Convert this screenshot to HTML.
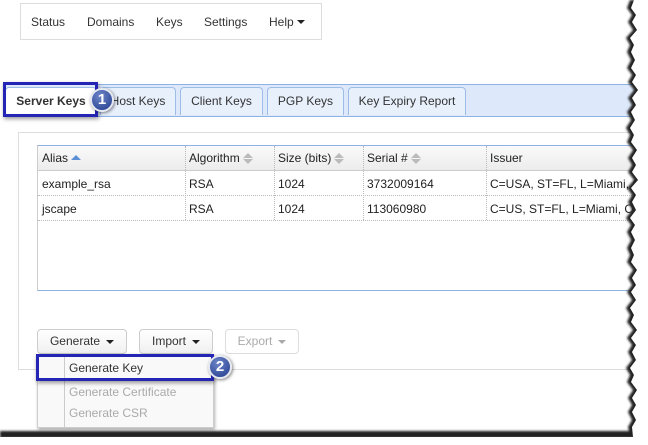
<!DOCTYPE html>
<html><head><style>
body{margin:0;width:648px;height:445px;overflow:hidden;background:#fff;font-family:"Liberation Sans",Arial,sans-serif;font-size:12px;color:#222;position:relative}
.a{position:absolute}
.nav{left:20px;top:3px;width:300px;height:35px;border:1px solid #ddd;}
.nav span{position:absolute;top:11px;color:#333}
.tabbar{left:3px;top:84px;width:640px;height:31px;background:#dde9fb;border-top:1px solid #8db2e3;border-bottom:1px solid #8db2e3}
.tab{top:87px;height:28px;background:#e8f0fc;border:1px solid #9dbde8;border-bottom:none;border-radius:4px 4px 0 0;box-sizing:border-box;text-align:center;line-height:26px;color:#333}
.panel{left:18px;top:132px;width:640px;height:236px;border:1px solid #ddd;border-right:none}
.tbl{left:37px;top:145px;width:620px;height:144px;border-top:1px solid #8db2e3;border-left:1px solid #ccc;border-bottom:1px solid #8db2e3}
.hdr{left:38px;top:146px;width:620px;height:24px;background:linear-gradient(#fafafa,#ececec);border-bottom:1px solid #ccc}
.c{position:absolute;color:#222}
.vl{position:absolute;width:0;border-left:1px dotted #bbb}
.hl{position:absolute;left:38px;width:620px;border-top:1px dotted #bbb}
.btn{top:329px;height:25px;border:1px solid #ccc;border-radius:4px;box-sizing:border-box;background:linear-gradient(#fff,#f0f0f0);line-height:23px;text-align:center;color:#333}
.car{display:inline-block;width:0;height:0;border-left:4px solid transparent;border-right:4px solid transparent;border-top:4px solid #222;vertical-align:middle;margin-left:6px}
.srt{display:inline-block;vertical-align:middle;margin-left:3px;width:10px;height:11px;position:relative}
.srt:before{content:"";position:absolute;left:0;top:0;border-left:5px solid transparent;border-right:5px solid transparent;border-bottom:5px solid #bbb}
.srt:after{content:"";position:absolute;left:0;top:6px;border-left:5px solid transparent;border-right:5px solid transparent;border-top:5px solid #bbb}
.menu{left:37px;top:355px;width:175px;height:71px;border:1px solid #ccc;background:#f9f9f9;box-shadow:1px 2px 3px rgba(0,0,0,.3)}
.badge{width:20px;height:20px;border-radius:50%;background:radial-gradient(circle at 40% 30%,#6f86c8,#1e3a8c);border:2px solid #e5e8f0;box-shadow:1px 1px 3px rgba(0,0,0,.5);color:#fff;font-weight:bold;font-size:15px;text-align:center;line-height:20px}
.hi{border:3px solid #2525b5;box-sizing:border-box;box-shadow:1px 2px 4px rgba(0,0,0,.4)}
</style></head><body>
<div class="a nav"><span style="left:10px">Status</span><span style="left:66px">Domains</span><span style="left:135px">Keys</span><span style="left:183px">Settings</span><span style="left:248px">Help</span><span class="a car" style="left:276px;top:16px;margin:0"></span></div>
<div class="a tabbar"></div>
<div class="a tab" style="left:5px;width:92px;background:#fff;height:30px;font-weight:bold">Server Keys</div>
<div class="a tab" style="left:100px;width:76px">Host Keys</div>
<div class="a tab" style="left:180px;width:83px">Client Keys</div>
<div class="a tab" style="left:267px;width:77px">PGP Keys</div>
<div class="a tab" style="left:348px;width:118px">Key Expiry Report</div>
<div class="a panel"></div>
<div class="a tbl"></div>
<div class="a hdr"></div>
<div class="vl" style="left:185px;top:146px;height:74px"></div>
<div class="vl" style="left:274px;top:146px;height:74px"></div>
<div class="vl" style="left:363px;top:146px;height:74px"></div>
<div class="vl" style="left:486px;top:146px;height:74px"></div>
<div class="hl" style="top:195px"></div>
<div class="hl" style="top:220px"></div>
<div class="c" style="left:42px;top:151px">Alias <span style="display:inline-block;vertical-align:middle;border-left:5px solid transparent;border-right:5px solid transparent;border-bottom:5px solid #5b8fd6;margin-top:-3px"></span></div>
<div class="c" style="left:189px;top:151px">Algorithm<span class="srt"></span></div>
<div class="c" style="left:278px;top:151px">Size (bits)<span class="srt"></span></div>
<div class="c" style="left:367px;top:151px">Serial #<span class="srt"></span></div>
<div class="c" style="left:490px;top:151px">Issuer</div>
<div class="c" style="left:42px;top:177px">example_rsa</div>
<div class="c" style="left:189px;top:177px">RSA</div>
<div class="c" style="left:278px;top:177px">1024</div>
<div class="c" style="left:367px;top:177px">3732009164</div>
<div class="c" style="left:490px;top:177px;white-space:nowrap">C=USA, ST=FL, L=Miami, O</div>
<div class="c" style="left:42px;top:202px">jscape</div>
<div class="c" style="left:189px;top:202px">RSA</div>
<div class="c" style="left:278px;top:202px">1024</div>
<div class="c" style="left:367px;top:202px">113060980</div>
<div class="c" style="left:490px;top:202px;white-space:nowrap">C=US, ST=FL, L=Miami, O</div>
<div class="a btn" style="left:37px;width:90px">Generate<span class="car"></span></div>
<div class="a btn" style="left:139px;width:74px">Import<span class="car"></span></div>
<div class="a btn" style="left:225px;width:74px;color:#aaa;background:#fff;border-color:#ddd">Export<span class="car" style="border-top-color:#aaa"></span></div>
<div class="a menu">
<div class="a" style="left:26px;top:0;height:71px;border-left:1px solid #ccc"></div>
<div class="a" style="left:31px;top:5px;color:#333">Generate Key</div>
<div class="a" style="left:31px;top:29px;color:#aaa">Generate Certificate</div>
<div class="a" style="left:31px;top:50px;color:#aaa">Generate CSR</div>
</div>
<div class="a hi" style="left:3px;top:82px;width:95px;height:35px"></div>
<div class="a hi" style="left:36px;top:354px;width:178px;height:27px"></div>
<div class="a badge" style="left:90px;top:88px">1</div>
<div class="a badge" style="left:208px;top:355px">2</div>
<svg class="a" style="left:0;top:0" width="648" height="445">
<defs><filter id="b"><feGaussianBlur stdDeviation="1"/></filter></defs>
<path d="M630 0 L627 8 L632 15 L628 22 L633 30 L626 38 L630 45 L627 52 L631 60 L627 68 L632 75 L628 82 L634 90 L628 98 L632 105 L627 112 L631 120 L626 128 L630 135 L627 142 L633 150 L628 158 L632 165 L628 172 L634 180 L627 188 L632 195 L628 202 L632 210 L626 218 L631 225 L627 232 L631 240 L627 248 L630 255 L627 262 L633 270 L628 278 L632 285 L627 292 L632 300 L626 308 L630 315 L627 322 L633 330 L627 338 L632 345 L628 352 L632 360 L626 368 L630 375 L627 382 L633 390 L628 398 L632 405 L628 412 L632 420 L628 427 L629 431 L0 431 L0 438 L640 438 L640 0 Z" fill="#222" filter="url(#b)"/>
<path d="M634 0 L631 8 L636 15 L632 22 L637 30 L630 38 L634 45 L631 52 L635 60 L631 68 L636 75 L632 82 L638 90 L632 98 L636 105 L631 112 L635 120 L630 128 L634 135 L631 142 L637 150 L632 158 L636 165 L632 172 L638 180 L631 188 L636 195 L632 202 L636 210 L630 218 L635 225 L631 232 L635 240 L631 248 L634 255 L631 262 L637 270 L632 278 L636 285 L631 292 L636 300 L630 308 L634 315 L631 322 L637 330 L631 338 L636 345 L632 352 L636 360 L630 368 L634 375 L631 382 L637 390 L632 398 L636 405 L632 412 L636 420 L632 427 L633 437 L0 437 L0 445 L648 445 L648 0 Z" fill="#fff"/>
</svg>
</body></html>
